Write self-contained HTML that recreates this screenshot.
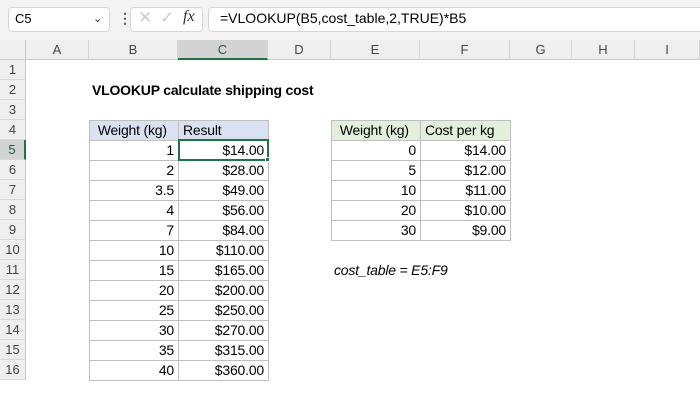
<!DOCTYPE html>
<html><head><style>
*{margin:0;padding:0;box-sizing:border-box}
body{width:700px;height:400px;background:#fff;font-family:"Liberation Sans",sans-serif;position:relative;overflow:hidden;color:#000}
.a{position:absolute}
.top{left:0;top:0;width:700px;height:40px;background:#f3f3f3}
.box{background:#fff;border:1px solid #d6d6d6;border-radius:4px}
.ch{top:40px;height:20px;background:#efefef;border-right:1px solid #d4d4d4;border-bottom:1px solid #c8c8c8;font-size:13px;color:#444;text-align:center;line-height:20px}
.rh{left:0;width:26px;height:20px;background:#efefef;border-bottom:1px solid #d8d8d8;border-right:1px solid #c8c8c8;font-size:13px;color:#444;text-align:center;line-height:20px}
.c{height:20px;border:1px solid #bfbfbf;font-size:14px;line-height:19px;padding:0 4px;white-space:nowrap;letter-spacing:-0.2px}
.r{text-align:right}
</style></head><body>
<div class="a top"></div>
<div class="a box" style="left:8px;top:7px;width:102px;height:25px"></div>
<div class="a" style="left:15px;top:11px;font-size:13px">C5</div>
<div class="a" style="left:93px;top:12px;font-size:11px;color:#333">&#8964;</div>
<div class="a" style="left:118px;top:10px;font-size:14px;color:#555;font-weight:bold">&#8942;</div>
<div class="a box" style="left:130px;top:7px;width:73px;height:25px"></div>
<div class="a" style="left:138px;top:8px;font-size:17px;color:#ccc">&#10005;</div>
<div class="a" style="left:160px;top:8px;font-size:17px;color:#ccc">&#10003;</div>
<div class="a" style="left:183px;top:8px;font-size:16px;font-style:italic;font-family:'Liberation Serif',serif;color:#333">fx</div>
<div class="a box" style="left:208px;top:7px;width:500px;height:25px"></div>
<div class="a" style="left:220px;top:10px;font-size:14px">=VLOOKUP(B5,cost_table,2,TRUE)*B5</div>
<div class="a" style="left:0;top:40px;width:26px;height:20px;background:#efefef;border-right:1px solid #c8c8c8;border-bottom:1px solid #c8c8c8"></div>
<div class="a ch" style="left:26px;width:63px">A</div>
<div class="a ch" style="left:89px;width:89px">B</div>
<div class="a ch" style="left:178px;width:90px;background:#d3d3d3;border-bottom:2px solid #217346;color:#1e5e3a">C</div>
<div class="a ch" style="left:268px;width:63px">D</div>
<div class="a ch" style="left:331px;width:89px">E</div>
<div class="a ch" style="left:420px;width:90px">F</div>
<div class="a ch" style="left:510px;width:62px">G</div>
<div class="a ch" style="left:572px;width:63px">H</div>
<div class="a ch" style="left:635px;width:65px">I</div>
<div class="a rh" style="top:60px">1</div><div class="a rh" style="top:80px">2</div><div class="a rh" style="top:100px">3</div><div class="a rh" style="top:120px">4</div>
<div class="a rh" style="top:140px;background:#d3d3d3;border-right:2px solid #217346;color:#1e5e3a">5</div>
<div class="a rh" style="top:160px">6</div><div class="a rh" style="top:180px">7</div><div class="a rh" style="top:200px">8</div><div class="a rh" style="top:220px">9</div><div class="a rh" style="top:240px">10</div><div class="a rh" style="top:260px">11</div><div class="a rh" style="top:280px">12</div><div class="a rh" style="top:300px">13</div><div class="a rh" style="top:320px">14</div><div class="a rh" style="top:340px">15</div><div class="a rh" style="top:360px">16</div>
<div class="a" style="left:92px;top:82px;font-size:14px;font-weight:bold;letter-spacing:-0.2px">VLOOKUP calculate shipping cost</div>
<div id="t1"></div>
<script>
var h='';
function cell(x,y,w,t,cls,bg){h+='<div class="a c '+cls+'" style="left:'+x+'px;top:'+y+'px;width:'+(w+1)+'px;height:21px;'+(bg?'background:'+bg:'')+'">'+t+'</div>';}
cell(89,120,89,'&nbsp;Weight (kg)','','#d9e1f2');cell(178,120,90,'Result','','#d9e1f2');
var b=[1,2,3.5,4,7,10,15,20,25,30,35,40],c=['14.00','28.00','49.00','56.00','84.00','110.00','165.00','200.00','250.00','270.00','315.00','360.00'];
for(var i=0;i<12;i++){cell(89,140+i*20,89,b[i],'r');cell(178,140+i*20,90,'$'+c[i],'r');}
cell(331,120,89,'&nbsp;Weight (kg)','','#e2efda');cell(420,120,90,'Cost per kg','','#e2efda');
var e=[0,5,10,20,30],f=['14.00','12.00','11.00','10.00','9.00'];
for(i=0;i<5;i++){cell(331,140+i*20,89,e[i],'r');cell(420,140+i*20,90,'$'+f[i],'r');}
document.getElementById('t1').innerHTML=h;
</script>
<div class="a" style="left:178px;top:139px;width:91px;height:22px;border:2px solid #217346"></div>
<div class="a" style="left:265px;top:157px;width:5px;height:5px;background:#217346;border:1px solid #fff"></div>
<div class="a" style="left:334px;top:262px;font-size:14px;font-style:italic;letter-spacing:-0.2px">cost_table = E5:F9</div>
</body></html>
